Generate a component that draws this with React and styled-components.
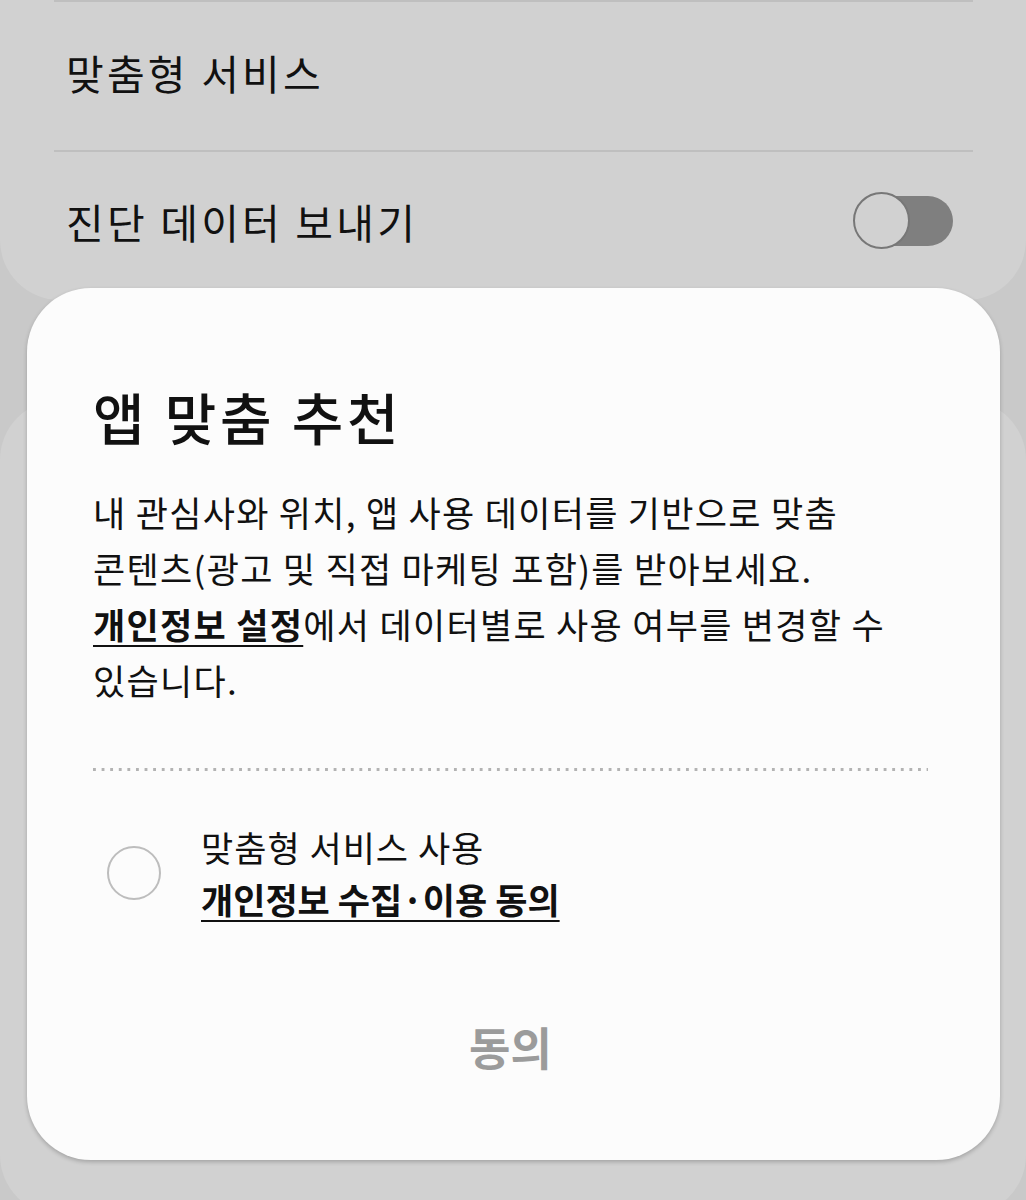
import React from 'react';
import styled, { createGlobalStyle } from 'styled-components';

const GlobalStyle = createGlobalStyle`
  html, body {
    margin: 0;
    padding: 0;
  }
  body {
    font-family: "Noto Sans CJK KR", "Noto Sans", sans-serif;
    background: #c9c9c9;
  }
`;

const Screen = styled.div`
  position: relative;
  width: 1026px;
  height: 1200px;
  overflow: hidden;
  background: #c9c9c9;
`;

const Card = styled.div`
  background: #d1d1d1;
  border-radius: ${p => p.$top ? '0 0 60px 60px' : '60px'};
  height: ${p => p.$height}px;
  margin-top: ${p => p.$gap || 0}px;
  padding: 0 53px 0 54px;
`;

const Row = styled.div`
  display: flex;
  align-items: center;
  justify-content: space-between;
  box-sizing: border-box;
  height: ${p => p.$height}px;
  border-top: 2px solid #bfbfbf;
  padding: 0 0 8px 12px;
  font-size: 41px;
  color: #111;
  letter-spacing: 3.2px;
`;

const Toggle = styled.div`
  position: relative;
  width: 100px;
  height: 58px;
  margin-right: 20px;

  &::before {
    content: '';
    position: absolute;
    right: 0;
    top: 4px;
    width: 70px;
    height: 50px;
    border-radius: 0 25px 25px 0;
    background: #7f7f7f;
  }
  &::after {
    content: '';
    position: absolute;
    left: 0;
    top: 0;
    width: 53px;
    height: 53px;
    border-radius: 50%;
    border: 2.5px solid #777;
    background: #d1d1d1;
  }
`;

const Dialog = styled.div`
  position: absolute;
  left: 27px;
  top: 288px;
  width: 973px;
  height: 872px;
  box-sizing: border-box;
  background: #fcfcfc;
  border-radius: 64px;
  box-shadow: 0 2px 4px rgba(0, 0, 0, 0.22);
  padding: 93px 60px 0 66px;
  display: flex;
  flex-direction: column;
  color: #111;
`;

const Title = styled.h2`
  margin: 0;
  font-size: 56px;
  font-weight: 500;
  line-height: 70px;
  letter-spacing: 3.8px;
`;

const Body = styled.p`
  margin: 33px 0 0;
  font-size: 35px;
  line-height: 56px;
  font-weight: 400;
  letter-spacing: 1.3px;
`;

const Link = styled.span`
  font-weight: 700;
  text-decoration: underline;
  text-decoration-thickness: 2px;
  text-underline-offset: 6px;
  letter-spacing: ${p => p.$tight ? '0' : 'inherit'};
`;

const Dotted = styled.div`
  margin-top: 60px;
  margin-right: 12px;
  height: 3px;
  background-image: linear-gradient(to right, #b3b3b3 3px, transparent 3px);
  background-size: 8.6px 3px;
`;

const Option = styled.label`
  display: flex;
  align-items: center;
  margin-top: 50px;
  gap: 40px;
  padding-left: 14px;
`;

const Radio = styled.span`
  flex: none;
  width: 50px;
  height: 50px;
  border-radius: 50%;
  border: 2.5px solid #bdbdbd;
`;

const OptionText = styled.div`
  font-size: 35px;
  line-height: 52px;
  letter-spacing: 1px;
`;

const AgreeButton = styled.button`
  align-self: center;
  margin: 92px 12px 0 0;
  border: none;
  background: none;
  padding: 0;
  font-family: inherit;
  font-size: 45px;
  font-weight: 700;
  line-height: 60px;
  color: #9b9b9b;
`;

export default function App() {
  return (
    <>
      <GlobalStyle />
      <Screen>
        <Card $top $height={300}>
          <Row $height={150}>맞춤형 서비스</Row>
          <Row $height={148}>
            진단 데이터 보내기
            <Toggle />
          </Row>
        </Card>
        <Card $height={815} $gap={100} />

        <Dialog>
          <Title>앱 맞춤 추천</Title>
          <Body>
            내 관심사와 위치, 앱 사용 데이터를 기반으로 맞춤<br />
            콘텐츠(광고 및 직접 마케팅 포함)를 받아보세요.<br />
            <Link>개인정보 설정</Link>에서 데이터별로 사용 여부를 변경할 수<br />
            있습니다.
          </Body>
          <Dotted />
          <Option>
            <Radio />
            <OptionText>
              맞춤형 서비스 사용<br />
              <Link $tight>개인정보 수집·이용 동의</Link>
            </OptionText>
          </Option>
          <AgreeButton>동의</AgreeButton>
        </Dialog>
      </Screen>
    </>
  );
}
